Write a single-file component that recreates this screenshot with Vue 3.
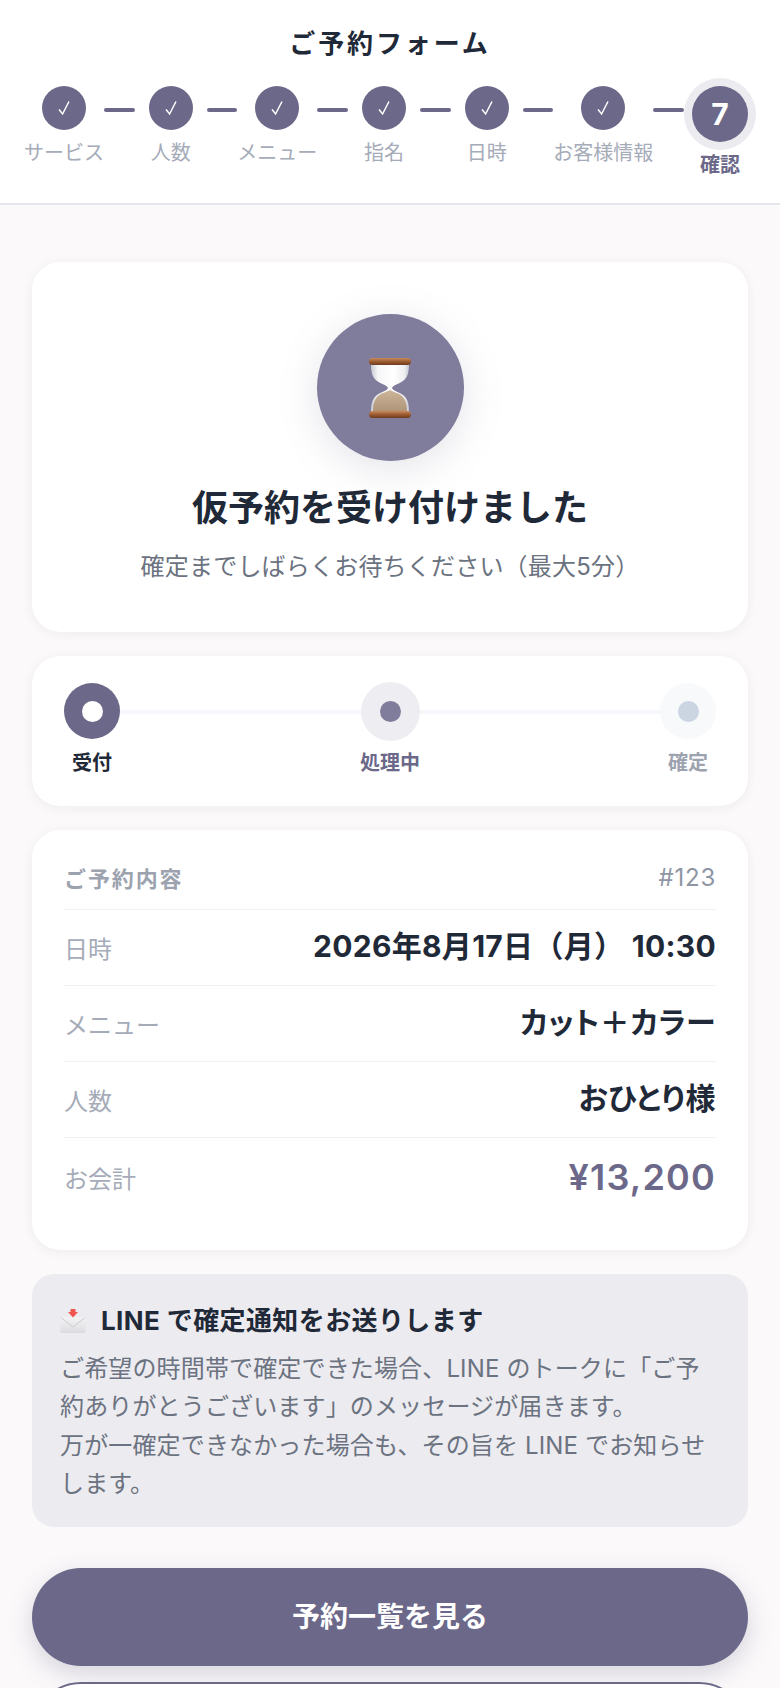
<template>
  <div class="page">
    <header class="header">
      <h1 class="title">ご予約フォーム</h1>
      <div class="stepper">
        <template v-for="(step, i) in steps" :key="step">
          <div :class="['step', { current: i === steps.length - 1 }]">
            <div class="step-circle">
              <template v-if="i === steps.length - 1">{{ i + 1 }}</template>
              <svg v-else width="14" height="16" viewBox="0 0 14 16">
                <path d="M2 9.5 L5.6 14 L12 1.5" fill="none" stroke="#fff" stroke-width="1.5" />
              </svg>
            </div>
            <div class="step-label">{{ step }}</div>
          </div>
          <div v-if="i < steps.length - 1" class="step-line"></div>
        </template>
      </div>
    </header>

    <main class="content">
      <section class="card hero">
        <div class="hero-icon">
          <svg width="42" height="62" viewBox="0 0 42 62">
            <defs>
              <linearGradient id="wood" x1="0" y1="0" x2="0" y2="1">
                <stop offset="0" stop-color="#c98a5c" />
                <stop offset="0.5" stop-color="#9c5c32" />
                <stop offset="1" stop-color="#6e3a1c" />
              </linearGradient>
              <linearGradient id="glass" x1="0" y1="0" x2="1" y2="0">
                <stop offset="0" stop-color="#c4c8d2" />
                <stop offset="0.18" stop-color="#f6f6f8" />
                <stop offset="0.6" stop-color="#ffffff" />
                <stop offset="0.88" stop-color="#eeeef1" />
                <stop offset="1" stop-color="#c4c8d2" />
              </linearGradient>
              <linearGradient id="sand" x1="0" y1="0" x2="0" y2="1">
                <stop offset="0" stop-color="#cdb59b" />
                <stop offset="1" stop-color="#b09578" />
              </linearGradient>
            </defs>
            <path d="M2 7 C2 15 3 20 8 24 C12 27 18 28 19 31 C18 34 12 35 8 38 C3 42 2 47 2 55 H40 C40 47 39 42 34 38 C30 35 24 34 23 31 C24 28 30 27 34 24 C39 20 40 15 40 7 Z" fill="url(#glass)" />
            <path d="M21 33 C24 35 30 36 33 39 C37 43 38 48 38 54 H4 C4 48 5 43 9 39 C12 36 18 35 21 33 Z" fill="url(#sand)" />
            <rect x="0" y="1" width="42" height="7" rx="3.5" fill="url(#wood)" />
            <rect x="0" y="54" width="42" height="7" rx="3.5" fill="url(#wood)" />
          </svg>
        </div>
        <h2 class="hero-title">仮予約を受け付けました</h2>
        <p class="hero-sub">確定までしばらくお待ちください（最大5分）</p>
      </section>

      <section class="card progress">
        <div class="progress-track"></div>
        <div v-for="p in progress" :key="p.label" :class="['progress-item', p.state]">
          <div class="progress-dot"><span></span></div>
          <div class="progress-label">{{ p.label }}</div>
        </div>
      </section>

      <section class="card detail">
        <div class="detail-head">
          <span class="detail-title">ご予約内容</span>
          <span class="detail-no">#123</span>
        </div>
        <div v-for="row in rows" :key="row.label" class="detail-row">
          <span class="detail-label">{{ row.label }}</span>
          <span :class="['detail-value', row.kind]">{{ row.value }}</span>
        </div>
      </section>

      <section class="notice">
        <div class="notice-title">
          <svg width="26" height="24" viewBox="0 0 26 24">
            <defs>
              <linearGradient id="mail" x1="0" y1="0" x2="0" y2="1">
                <stop offset="0" stop-color="#f4f4f5" />
                <stop offset="1" stop-color="#dcdce0" />
              </linearGradient>
            </defs>
            <rect x="0.5" y="8" width="25" height="16" rx="1.5" fill="url(#mail)" />
            <path d="M1 8.5 L13 18 L25 8.5" fill="none" stroke="#cbccd1" stroke-width="1" />
            <path d="M10.5 0 H15.5 V3 H18 L13 8.5 L8 3 H10.5 Z" fill="#f0564f" />
          </svg>
          <span>LINE で確定通知をお送りします</span>
        </div>
        <p class="notice-body">ご希望の時間帯で確定できた場合、LINE のトークに「ご予約ありがとうございます」のメッセージが届きます。<br />万が一確定できなかった場合も、その旨を LINE でお知らせします。</p>
      </section>

      <button class="btn primary">予約一覧を見る</button>
      <button class="btn outline"></button>
    </main>
  </div>
</template>

<script setup>
const steps = ['サービス', '人数', 'メニュー', '指名', '日時', 'お客様情報', '確認']

const progress = [
  { label: '受付', state: 'done' },
  { label: '処理中', state: 'active' },
  { label: '確定', state: 'todo' }
]

const rows = [
  { label: '日時', value: '2026年8月17日（月） 10:30', kind: 'date' },
  { label: 'メニュー', value: 'カット＋カラー', kind: 'text' },
  { label: '人数', value: 'おひとり様', kind: 'text' },
  { label: 'お会計', value: '¥13,200', kind: 'price' }
]
</script>

<style>
html,
body {
  margin: 0;
  background: #fbf9fa;
}
</style>

<style scoped>
.page {
  height: 1688px;
  overflow: hidden;
  background: #fbf9fa;
  font-family: Inter, "Noto Sans CJK JP", sans-serif;
  color: #1f2937;
}

/* ヘッダー */
.header {
  box-sizing: border-box;
  height: 205px;
  padding: 26px 24px 0;
  background: #fff;
  border-bottom: 2px solid #e5e5ec;
}

.title {
  margin: 0 0 24px;
  font-size: 26px;
  line-height: 36px;
  font-weight: 700;
  letter-spacing: 2.9px;
  text-align: center;
}

.stepper {
  display: flex;
  align-items: flex-start;
}

.step {
  display: flex;
  flex-direction: column;
  align-items: center;
  min-width: 72px;
}

.step-circle {
  display: flex;
  align-items: center;
  justify-content: center;
  width: 44px;
  height: 44px;
  border-radius: 50%;
  background: #6b6889;
  color: #fff;
}

.step-label {
  margin-top: 8px;
  font-size: 20px;
  line-height: 30px;
  color: #a5abb8;
  white-space: nowrap;
}

.step-line {
  flex: 1;
  height: 4px;
  margin-top: 22px;
  border-radius: 2px;
  background: #6b6889;
}

.step.current .step-circle {
  width: 56px;
  height: 56px;
  font-size: 30px;
  font-weight: 700;
  box-shadow: 0 0 0 8px #ecebf0;
}

.step.current .step-label {
  font-weight: 700;
  color: #6b6889;
}

/* 本文 */
.content {
  display: flex;
  flex-direction: column;
  gap: 24px;
  padding: 57px 32px 0;
}

.card {
  background: #fff;
  border-radius: 28px;
  box-shadow: 0 2px 12px rgba(31, 41, 55, 0.06);
}

.hero {
  display: flex;
  flex-direction: column;
  align-items: center;
  height: 370px;
  box-sizing: border-box;
  padding-top: 52px;
}

.hero-icon {
  display: flex;
  align-items: center;
  justify-content: center;
  width: 147px;
  height: 147px;
  border-radius: 50%;
  background: #7f7c9c;
  box-shadow: 0 8px 40px rgba(107, 104, 137, 0.18);
}

.hero-title {
  margin: 21px 0 0;
  font-size: 36px;
  line-height: 52px;
  font-weight: 700;
}

.hero-sub {
  margin: 15px 0 0;
  font-size: 24px;
  line-height: 36px;
  letter-spacing: 0.2px;
  color: #6b7280;
}

.progress {
  position: relative;
  display: flex;
  justify-content: space-between;
  height: 150px;
  box-sizing: border-box;
  padding: 27px 32px 0;
}

.progress-track {
  position: absolute;
  top: 54px;
  left: 60px;
  right: 60px;
  height: 4px;
  background: #f6f7fa;
}

.progress-item {
  position: relative;
  display: flex;
  flex-direction: column;
  align-items: center;
  width: 56px;
}

.progress-dot {
  display: flex;
  align-items: center;
  justify-content: center;
  flex-shrink: 0;
  width: 56px;
  height: 56px;
  border-radius: 50%;
}

.progress-dot span {
  width: 21px;
  height: 21px;
  border-radius: 50%;
}

.done .progress-dot {
  background: #6b6889;
}

.done .progress-dot span {
  background: #fff;
}

.active .progress-dot {
  width: 59px;
  height: 59px;
  margin-top: -1px;
  margin-bottom: -2px;
  background: #eeeef2;
}

.active .progress-dot span {
  background: #807d9c;
}

.todo .progress-dot {
  background: #f8f9fb;
}

.todo .progress-dot span {
  background: #cbd5e1;
}

.progress-label {
  margin-top: 10px;
  font-size: 20px;
  line-height: 28px;
  font-weight: 700;
  white-space: nowrap;
}

.active .progress-label {
  color: #6b6889;
}

.todo .progress-label {
  color: #9ca3af;
}

.detail {
  box-sizing: border-box;
  height: 420px;
  padding: 24px 32px 0;
}

.detail-head {
  display: flex;
  justify-content: space-between;
  align-items: center;
  height: 46px;
  padding-bottom: 9px;
  border-bottom: 1px solid #f1f2f5;
}

.detail-title {
  font-size: 22px;
  font-weight: 700;
  letter-spacing: 1.9px;
  color: #9ca3af;
}

.detail-no {
  font-size: 24px;
  letter-spacing: 0.75px;
  color: #8f96a3;
}

.detail-row {
  display: flex;
  justify-content: space-between;
  align-items: center;
  height: 75px;
  border-bottom: 1px solid #f1f2f5;
}

.detail-row:last-child {
  height: 78px;
  border-bottom: 0;
}

.detail-label {
  font-size: 24px;
  color: #a5abb8;
}

.detail-value {
  font-size: 30px;
  font-weight: 700;
  color: #1f2937;
}

.detail-value.date {
  padding-bottom: 8px;
  letter-spacing: 0.3px;
}

.detail-value.text {
  padding-bottom: 8px;
  letter-spacing: 0.5px;
  font-feature-settings: "palt";
}

.detail-value.price {
  font-size: 36px;
  font-weight: 600;
  letter-spacing: 1.2px;
  color: #6b6889;
}

.notice {
  box-sizing: border-box;
  height: 253px;
  padding: 29px 28px 0;
  border-radius: 22px;
  background: #ecebf0;
}

.notice-title {
  display: flex;
  align-items: center;
  gap: 15px;
  font-size: 26px;
  line-height: 36px;
  font-weight: 700;
  letter-spacing: 0.4px;
}

.notice-body {
  margin: 11px 0 0;
  font-size: 24px;
  line-height: 38.4px;
  letter-spacing: 0.15px;
  color: #6b7280;
}

.btn {
  display: block;
  width: 100%;
  height: 98px;
  flex-shrink: 0;
  border-radius: 49px;
  font-family: inherit;
  font-size: 28px;
  font-weight: 700;
}

.primary {
  margin-top: 17px;
  padding-bottom: 6px;
  border: 0;
  background: #6b6889;
  color: #fff;
  box-shadow: 0 8px 24px rgba(107, 104, 137, 0.25);
}

.outline {
  margin-top: -8px;
  border: 2px solid #6b6889;
  background: #fff;
}
</style>
